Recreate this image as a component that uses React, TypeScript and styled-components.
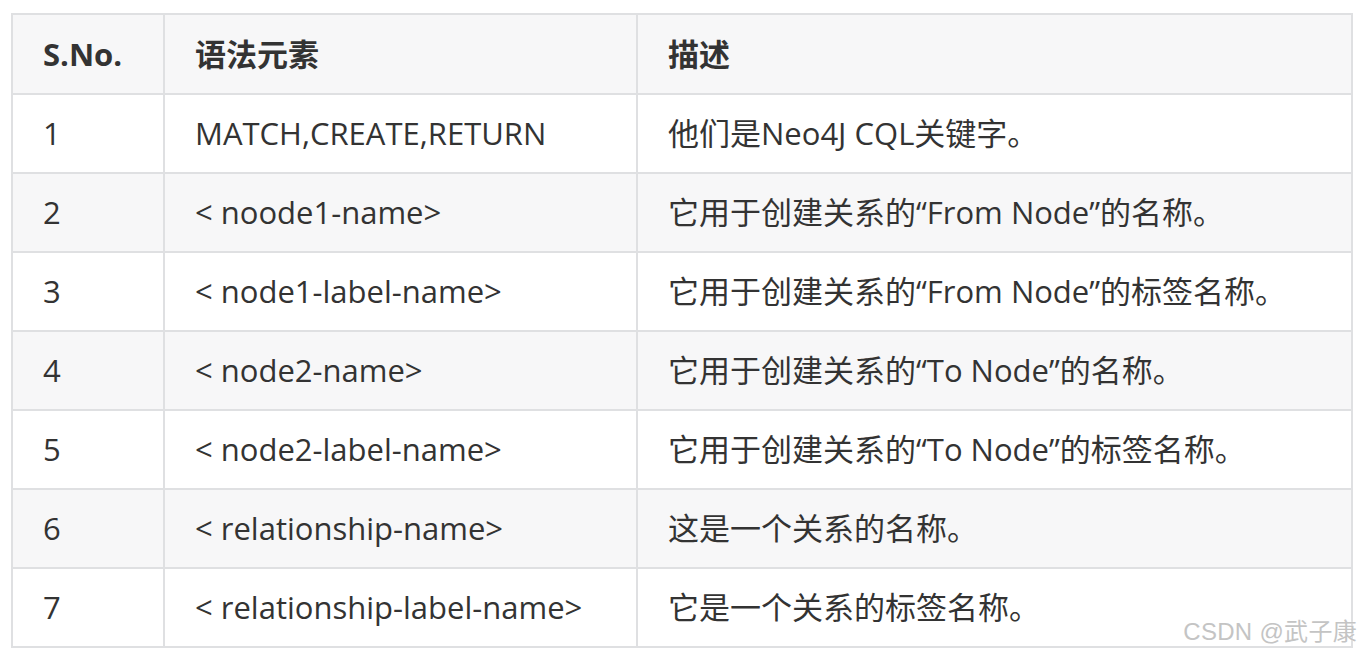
import * as React from "react";
import styled, { createGlobalStyle } from "styled-components";

const GlobalStyle = createGlobalStyle`
  html, body {
    margin: 0;
    padding: 0;
    background: #fff;
  }
  body {
    font-family: "Open Sans", "Noto Sans CJK SC", sans-serif;
    color: #333;
  }
`;

const Page = styled.div`
  position: relative;
  width: 1364px;
  height: 658px;
  padding: 13px 11px 0 11px;
  box-sizing: border-box;
  overflow: hidden;
`;

const Table = styled.table`
  width: 1342px;
  border-collapse: collapse;
  border: 2px solid #dfe0e2;
  table-layout: fixed;
  font-size: 31px;
  line-height: 1.3;
`;

const Row = styled.tr<{ shaded: boolean }>`
  height: 79px;
  background: ${props => (props.shaded ? "#f7f7f8" : "#fff")};
`;

const HeadCell = styled.th`
  border: 2px solid #dfe0e2;
  text-align: left;
  font-weight: 700;
  padding: 0 30px;
  color: #333;
`;

const Cell = styled.td`
  border: 2px solid #dfe0e2;
  padding: 0 30px;
  white-space: nowrap;
  color: #333;
`;

const Watermark = styled.div`
  position: absolute;
  right: 7px;
  bottom: 11px;
  font-family: "Liberation Sans", "Noto Sans CJK SC", sans-serif;
  font-size: 24px;
  color: #c4c4c4;
  text-shadow: 0 0 1px #fff;
  letter-spacing: 0.3px;
`;

const rows = [
  ["1", "MATCH,CREATE,RETURN", "他们是Neo4J CQL关键字。"],
  ["2", "< noode1-name>", "它用于创建关系的“From Node”的名称。"],
  ["3", "< node1-label-name>", "它用于创建关系的“From Node”的标签名称。"],
  ["4", "< node2-name>", "它用于创建关系的“To Node”的名称。"],
  ["5", "< node2-label-name>", "它用于创建关系的“To Node”的标签名称。"],
  ["6", "< relationship-name>", "这是一个关系的名称。"],
  ["7", "< relationship-label-name>", "它是一个关系的标签名称。"]
];

export default function App() {
  return (
    <Page>
      <GlobalStyle />
      <Table>
        <colgroup>
          <col style={{ width: 152 }} />
          <col style={{ width: 473 }} />
          <col />
        </colgroup>
        <thead>
          <Row shaded={true} style={{ height: 80 }}>
            <HeadCell>S.No.</HeadCell>
            <HeadCell>语法元素</HeadCell>
            <HeadCell>描述</HeadCell>
          </Row>
        </thead>
        <tbody>
          {rows.map((r, i) => (
            <Row key={r[0]} shaded={i % 2 === 1}>
              <Cell>{r[0]}</Cell>
              <Cell>{r[1]}</Cell>
              <Cell>{r[2]}</Cell>
            </Row>
          ))}
        </tbody>
      </Table>
      <Watermark>CSDN @武子康</Watermark>
    </Page>
  );
}
